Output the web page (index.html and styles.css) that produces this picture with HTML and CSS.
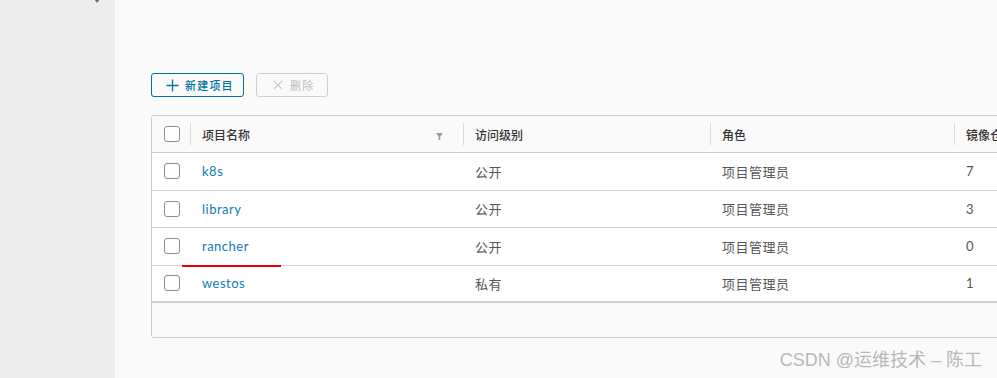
FILE: index.html
```html
<!DOCTYPE html>
<html lang="zh">
<head>
<meta charset="utf-8">
<link rel="stylesheet" href="styles.css">
</head>
<body>
<div class="app">
  <aside class="sidebar">
    <svg class="chev" width="10" height="6" viewBox="0 0 10 6"><path d="M2 -2 L5 1.5 L8 -2" fill="none" stroke="#666" stroke-width="1.6"/></svg>
  </aside>
  <main class="main">
    <div class="toolbar">
      <button class="btn btn-primary">
        <svg width="13" height="13" viewBox="0 0 13 13"><path d="M6.5 0.5 V12.5 M0.5 6.5 H12.5" stroke="#0072a3" stroke-width="1.3"/></svg>
        <span>新建项目</span>
      </button>
      <button class="btn btn-disabled">
        <svg width="10" height="10" viewBox="0 0 10 10"><path d="M0.8 0.8 L9.2 9.2 M9.2 0.8 L0.8 9.2" stroke="#c4c4c4" stroke-width="1.1"/></svg>
        <span>删除</span>
      </button>
    </div>
    <div class="grid">
      <div class="row head">
        <div class="cell chk"><span class="box"></span></div>
        <div class="cell sep name">项目名称
          <svg class="filter" width="7" height="7" viewBox="0 0 7 7"><path d="M0 0 H7 L4.3 3.4 V7 L2.7 7 V3.4 Z" fill="#9a9a9a"/></svg>
        </div>
        <div class="cell sep">访问级别</div>
        <div class="cell sep">角色</div>
        <div class="cell sep">镜像仓库</div>
      </div>
      <div class="row">
        <div class="cell chk"><span class="box"></span></div>
        <div class="cell"><a class="link">k8s</a></div>
        <div class="cell">公开</div>
        <div class="cell">项目管理员</div>
        <div class="cell">7</div>
      </div>
      <div class="row">
        <div class="cell chk"><span class="box"></span></div>
        <div class="cell"><a class="link">library</a></div>
        <div class="cell">公开</div>
        <div class="cell">项目管理员</div>
        <div class="cell">3</div>
      </div>
      <div class="row">
        <div class="cell chk"><span class="box"></span></div>
        <div class="cell"><a class="link">rancher</a><span class="redline"></span></div>
        <div class="cell">公开</div>
        <div class="cell">项目管理员</div>
        <div class="cell">0</div>
      </div>
      <div class="row last">
        <div class="cell chk"><span class="box"></span></div>
        <div class="cell"><a class="link">westos</a></div>
        <div class="cell">私有</div>
        <div class="cell">项目管理员</div>
        <div class="cell">1</div>
      </div>
      <div class="footer"></div>
    </div>
  </main>
</div>
<div class="watermark">CSDN @运维技术 – 陈工</div>
</body>
</html>
```
FILE: styles.css
```css
html, body {
  margin: 0;
  padding: 0;
  width: 997px;
  height: 378px;
  overflow: hidden;
  background: #fafafa;
  font-family: Lato, "Noto Sans CJK SC", sans-serif;
}
body {
  position: relative;
}
.app {
  display: flex;
  height: 378px;
}
.sidebar {
  width: 115px;
  flex: none;
  background: #ededed;
  position: relative;
}
.chev {
  position: absolute;
  left: 92px;
  top: 0;
}
.main {
  flex: 1;
  padding: 73px 0 0 36px;
  min-width: 0;
}
.toolbar {
  display: flex;
  gap: 12px;
  margin-bottom: 18px;
}
.btn {
  height: 24px;
  box-sizing: border-box;
  border-radius: 3px;
  background: transparent;
  display: flex;
  align-items: center;
  gap: 6px;
  font-family: "Noto Sans CJK SC", sans-serif;
  font-size: 11px;
  letter-spacing: 1.2px;
  padding: 0;
  margin: 0;
}
.btn-primary {
  width: 93px;
  border: 1px solid #0072a3;
  color: #0072a3;
  padding-left: 14px;
  font-weight: 500;
}
.btn-disabled {
  width: 72px;
  border: 1px solid #cfcfcf;
  color: #bdbdbd;
  padding-left: 16px;
  gap: 7px;
}
.grid {
  width: 1100px;
  border: 1px solid #cccccc;
  border-radius: 3px;
  background: #fff;
  overflow: hidden;
}
.row {
  display: grid;
  grid-template-columns: 38px 273px 247px 244px 1fr;
  height: 37.5px;
  box-sizing: border-box;
  border-bottom: 1px solid #d0d0d0;
  align-items: center;
}
.row.head {
  height: 37px;
  background: #fafafa;
  border-bottom: 1px solid #cccccc;
}
.row.head .cell {
  font-size: 12px;
  color: #333;
  font-weight: 500;
  font-family: "Noto Sans CJK SC", sans-serif;
  letter-spacing: 0;
}
.row.last {
  border-bottom: 2px solid #d2d2d2;
}
.cell {
  position: relative;
  padding-left: 12px;
  font-size: 13px;
  color: #565656;
  font-family: Lato, "Noto Sans CJK SC", sans-serif;
  letter-spacing: 0.5px;
  height: 100%;
  display: flex;
  align-items: center;
}
.cell.chk {
  padding-left: 12px;
}
.box {
  width: 16px;
  height: 16px;
  box-sizing: border-box;
  border: 1px solid #8c8c8c;
  border-radius: 3px;
  background: #fff;
}
.sep::before {
  content: "";
  position: absolute;
  left: 0;
  top: 7px;
  bottom: 7px;
  width: 1px;
  background: #dadada;
}
.name .filter {
  position: absolute;
  left: 246px;
  top: 17px;
}
.link {
  color: #0f7bbd;
  font-size: 13px;
}
.redline {
  position: absolute;
  left: -8px;
  bottom: -2px;
  width: 99px;
  height: 2px;
  background: #e8000b;
  z-index: 2;
}
.footer {
  height: 34px;
  background: #fafafa;
}
.watermark {
  position: absolute;
  right: 15px;
  top: 345px;
  font-family: "Liberation Sans", "Noto Sans CJK SC", sans-serif;
  font-size: 18px;
  color: #b8b8b8;
  letter-spacing: 0;
  white-space: nowrap;
}
```
